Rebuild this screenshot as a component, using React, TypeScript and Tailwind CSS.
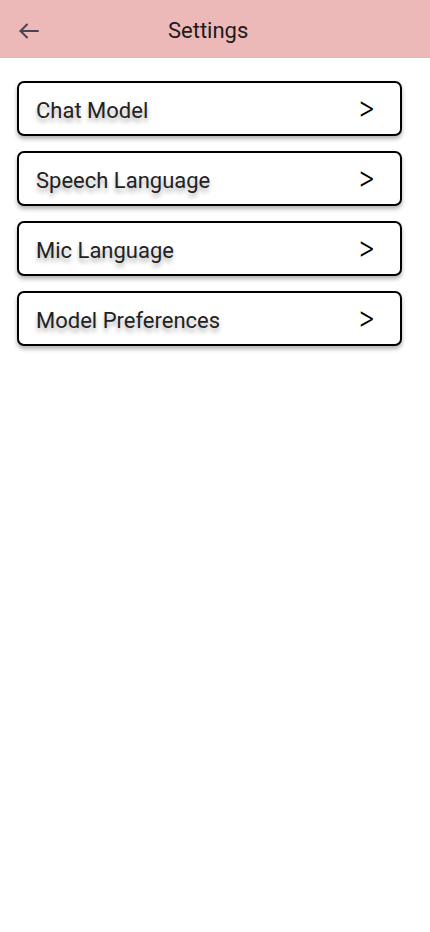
import React from "react";

const items = ["Chat Model", "Speech Language", "Mic Language", "Model Preferences"];

export default function App() {
  return (
    <div className="min-h-[932px] w-[430px] bg-white" style={{ fontFamily: "Roboto, 'Noto Sans', sans-serif" }}>
      <header className="flex h-[58px] items-center bg-[#ecb8b8] pt-[3px]">
        <button className="ml-[19px] flex h-[20px] w-[20px] items-center justify-center">
          <svg width="20" height="16" viewBox="0 0 20 16" fill="none" stroke="#49454f" strokeWidth="2" strokeLinecap="round" strokeLinejoin="round">
            <path d="M19 8H1.5" />
            <path d="M8 1.5L1.5 8L8 14.5" />
          </svg>
        </button>
        <h1 className="ml-[129px] text-[22px] leading-none font-normal text-[#1d1b20]">Settings</h1>
      </header>
      <div className="flex flex-col gap-[15px] pl-[17px] pt-[23px]">
        {items.map((t) => (
          <div
            key={t}
            className="flex h-[55px] w-[385px] items-center justify-between rounded-[7px] border-2 border-black bg-white pl-[17px] pr-[26px] shadow-[0_3px_4px_rgba(0,0,0,0.3)]"
          >
            <span className="pt-[4px] text-[22px] leading-none font-normal text-[#222] [text-shadow:0_4px_4px_rgba(0,0,0,0.3)]">{t}</span>
            <span className="inline-block origin-center scale-y-[1.3] text-[29px] leading-none font-light text-black">&gt;</span>
          </div>
        ))}
      </div>
    </div>
  );
}
